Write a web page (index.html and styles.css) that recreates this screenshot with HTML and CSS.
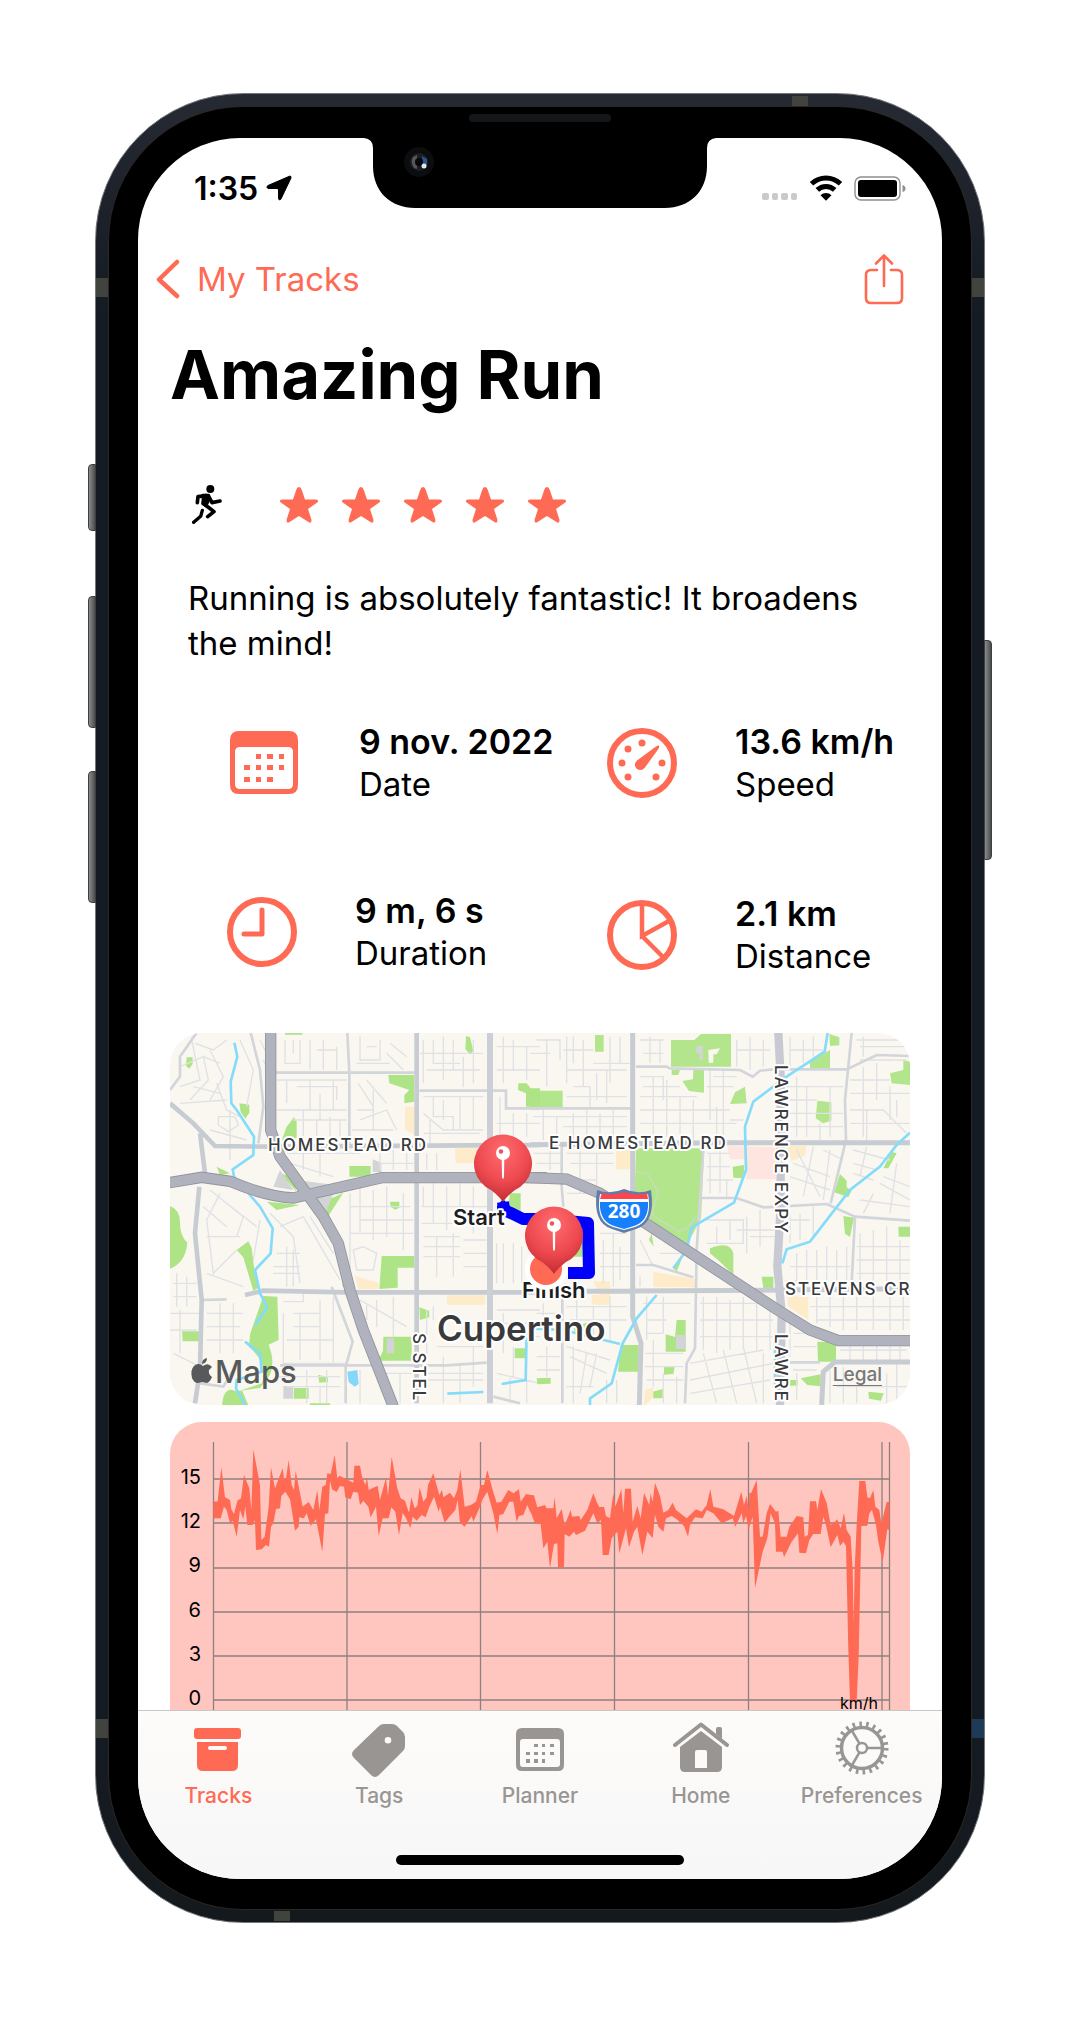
FILE: index.html
```html
<!DOCTYPE html>
<html lang="en">
<head>
<meta charset="utf-8">
<meta name="viewport" content="width=device-width, initial-scale=1">
<title>Amazing Run</title>
<link rel="stylesheet" href="styles.css">
</head>
<body>
<div class="phone">
  <span class="key key-mute"></span>
  <span class="key key-up"></span>
  <span class="key key-down"></span>
  <span class="key key-power"></span>
  <span class="band band-top"></span>
  <span class="band band-bottom"></span>
  <span class="band band-left-top"></span>
  <span class="band band-left-bottom"></span>
  <span class="band band-right-top"></span>
  <span class="band band-right-bottom"></span>
  <div class="bezel">
    <span class="speaker"></span>
    <div class="screen">
      <svg class="notch" viewBox="0 0 352 70" width="352" height="70" aria-hidden="true">
        <path d="M0 0Q9 1 9 10V28C9 54 27 70 51 70H301C325 70 343 54 343 28V10Q343 1 352 0Z"/>
        <circle cx="55" cy="24" r="15" fill="#0b0d0f"/>
        <circle cx="55" cy="24" r="9" fill="#1c1e22"/>
        <path d="M49 19Q46 24 50 30L53 31V17Z" fill="#55575a"/>
        <path d="M58 18L63 21V27H59Z" fill="#27568c"/>
        <circle cx="55" cy="24" r="4" fill="#050607"/>
        <circle cx="60" cy="28" r="2.500" fill="#dfe6f2"/>
      </svg>

      <header class="status">
        <div class="status-time">
          <span>1:35</span>
          <svg viewBox="0 0 26 26" width="26" height="26" aria-hidden="true"><path d="M23.500 1.200L1.800 10.600Q-.2 12.300 2 13.500H11Q12.500 13.500 12.500 15V23.500Q13 26 14.800 24.300L25 3Q25.400 .7 23.500 1.200Z" stroke="#000" stroke-linejoin="round"/></svg>
        </div>
        <div class="status-icons">
          <svg viewBox="0 0 36 26" width="36" height="26" fill="#cacaca" aria-hidden="true"><rect y="18" width="7" height="7" rx="2"/><rect x="10" y="18" width="6" height="7" rx="2"/><rect x="19" y="18" width="7" height="7" rx="2"/><rect x="29" y="18" width="6" height="7" rx="2"/></svg>
          <svg viewBox="0 0 34 26" width="34" height="26" fill="none" stroke="#000" stroke-width="5" aria-hidden="true"><path d="M2.500 8.800A21 21 0 0 1 31.500 8.800M8.300 14.900A12.500 12.500 0 0 1 25.700 14.900"/><path d="M11.500 20.300A8 8 0 0 1 22.500 20.300L17 25.700Z" fill="#000" stroke="none"/></svg>
          <svg viewBox="0 0 52 26" width="52" height="26" aria-hidden="true"><rect x="1" y="2" width="45" height="23" rx="6" fill="none" stroke="#8e8e8e" stroke-width="1.400"/><rect x="4" y="5" width="39" height="17" rx="3"/><path d="M48.500 10Q51.500 11 51.500 13.500T48.500 17Z" fill="#8e8e8e"/></svg>
        </div>
      </header>

      <nav class="nav">
        <a class="back" href="#tracks">
          <svg viewBox="0 0 24 40" width="24" height="40" fill="none" stroke="currentColor" stroke-width="4.500" stroke-linecap="round" stroke-linejoin="round" aria-hidden="true"><path d="M21 3L3 20.500L21 37"/></svg>
          <span>My Tracks</span>
        </a>
        <button class="share" type="button" aria-label="Share">
          <svg viewBox="0 0 40 52" width="40" height="52" fill="none" stroke="currentColor" stroke-width="2.600" stroke-linecap="round" stroke-linejoin="round" aria-hidden="true"><path d="M13 17H7Q2 17 2 22V45Q2 50 7 50H33Q38 50 38 45V22Q38 17 33 17H27M20 33V2.500M12 10.500L20 2.500L28 10.500"/></svg>
        </button>
      </nav>

      <main>
        <h1>Amazing Run</h1>
        <div class="rating">
          <svg viewBox="0 0 90 120" width="30" height="40" fill="none" stroke="#000" stroke-width="11" stroke-linecap="round" stroke-linejoin="round" role="img" aria-label="Running"><circle cx="55" cy="12" r="12" fill="#000" stroke="none"/><path d="M32 31L50 31L48 50L42 62L32 56L34 38Z" fill="#000" stroke-width="9"/><path d="M44 32L18 35L16 53M50 34L60 53L84 48M40 60L66 80L47 95"/><path d="M31 76L26 94L5 112" stroke-width="10"/></svg>
          <div class="stars" role="img" aria-label="5 of 5 stars">
            <svg class="star" viewBox="0 0 38 38"><use href="#star"/></svg>
            <svg class="star" viewBox="0 0 38 38"><use href="#star"/></svg>
            <svg class="star" viewBox="0 0 38 38"><use href="#star"/></svg>
            <svg class="star" viewBox="0 0 38 38"><use href="#star"/></svg>
            <svg class="star" viewBox="0 0 38 38"><use href="#star"/></svg>
          </div>
        </div>
        <p class="note">Running is absolutely fantastic! It broadens the mind!</p>

        <div class="stats">
          <div class="stats-col">
            <div class="stat">
              <svg viewBox="0 0 74 70" width="74" height="70" fill="currentColor" aria-hidden="true"><path fill-rule="evenodd" d="M12 3H62Q71 3 71 12V57Q71 66 62 66H12Q3 66 3 57V12Q3 3 12 3ZM13 19Q8 19 8 24V56Q8 61 13 61H61Q66 61 66 56V24Q66 19 61 19Z"/><path d="M29 26h5v5h-5zm11 0h6v5h-6zm12 0h5v5h-5zM17 37h6v5h-6zm12 0h5v5h-5zm11 0h6v5h-6zm12 0h5v5h-5zM17 49h6v5h-6zm12 0h5v5h-5zm11 0h6v5h-6z"/></svg>
              <div class="stat-text"><strong>9 nov. 2022</strong><span>Date</span></div>
            </div>
            <div class="stat">
              <svg viewBox="0 0 70 70" width="70" height="70" fill="none" stroke="currentColor" aria-hidden="true"><circle cx="35" cy="35" r="32" stroke-width="6"/><path d="M35 13V37H17" stroke-width="5" stroke-linecap="round" stroke-linejoin="round"/></svg>
              <div class="stat-text"><strong>9 m, 6 s</strong><span>Duration</span></div>
            </div>
          </div>
          <div class="stats-col stats-col-end">
            <div class="stat">
              <svg viewBox="0 0 70 70" width="70" height="70" fill="currentColor" aria-hidden="true"><circle cx="35" cy="35" r="32" fill="none" stroke="currentColor" stroke-width="6"/><circle cx="35" cy="15" r="3.500"/><circle cx="21" cy="21" r="3.500"/><circle cx="15" cy="35" r="3.500"/><circle cx="21" cy="49" r="3.500"/><circle cx="49" cy="49" r="3.500"/><circle cx="55" cy="35" r="3.500"/><path d="M49 18.500Q53 16 52 20L38 39.500Q34 44 29.500 40.500Q26 36.500 30 32.500Z"/></svg>
              <div class="stat-text"><strong>13.6 km/h</strong><span>Speed</span></div>
            </div>
            <div class="stat">
              <svg viewBox="0 0 70 70" width="70" height="70" fill="none" stroke="currentColor" aria-hidden="true"><circle cx="35" cy="35" r="32" stroke-width="6"/><path d="M35 4V36L62 21M35 36L57 58" stroke-width="4.500"/></svg>
              <div class="stat-text"><strong>2.1 km</strong><span>Distance</span></div>
            </div>
          </div>
        </div>

        <section class="map" aria-label="Map">
          <svg viewBox="0 0 740 372" aria-hidden="true">
            <defs>
              <path id="star" d="M19 1Q21 1 21.800 4L25 13.500H36Q40 14.500 36.500 17L28 23L31.500 34Q31.500 38 28.500 36L19 30L9.500 36Q6.500 38 6.500 34L10 23L1.500 17Q-2 14.500 2 13.500H13L16.200 4Q17 1 19 1Z"/>
              <radialGradient id="pin" cx=".5" cy=".25" r=".8"><stop offset="0" stop-color="#ff6b6e"/><stop offset=".55" stop-color="#ee4a50"/><stop offset="1" stop-color="#bb262e"/></radialGradient>
              <g id="marker"><path d="M0 42Q-4 36 -12 30A29 29 0 1 1 12 30Q4 36 0 42Z" transform="translate(0 26)" fill="url(#pin)"/><path d="M-1.300 24L-1 43Q0 47 1 43L1.300 24Z" fill="#fff"/><circle cy="19" r="7" fill="#fff"/><circle cx="-2" cy="17.500" r="2.200" fill="#ee5158"/></g>
            </defs>
            <rect width="740" height="372" fill="#faf7f1"/>

            <g transform="translate(-10 -13) scale(.33333)" fill="none">
              <g fill="#afe486">
                <path d="M80 112l18 0v20l-10 14-10-8zM238 250l30 4v24l-12 18-14-20zM402 292l8 12v50l-45 8 14-40zM685 165h78v80l-30 5v-25l15-15-60-20zM375 38h52v6h-52zM918 48l12 4 10 40-8 12-16-16zM1075 190l25 0 12 15h28v55h-42v-40l-24-10zM568 438h64v32h-64zM690 545h28v18l-12 6-14-8zM30 558q30 10 30 50t22 60q-5 60-52 78zM230 690l35-26 10 20 10 80 10 40-15 8-30-100zM310 828l42 2 4 130-30 14q20 50 4 90l-30 40-70 10q-40-20-44 44h80l-20-48 60-20q20-60-40-110l5-40z"/>
                <path d="M665 708h98v35h-50v60l-55 4zM778 862l30 10v20l-28 8zM670 950h85v72h-100l14-30zM66 934h54v30h-52zM402 1104h44v32h-44zM474 1064l30 8v14l-26 2zM1064 985h34v30h-34zM450 1150h60v6h-60zM360 460l50 55-15-45zM320 545l100 10-70 15zM460 560l90-42-45 70zM1050 520h32v60h-40zM540 700l30 110-22-10zM170 440l40 20-30 5z"/>
              </g>
              <path d="M735 260h30v85l-30-15zM885 385h70v45h-68zM585 768l70 20v20h-60zM860 826h116v28h-114z" fill="#fdebc9"/>
              <path d="M638 418l26 10v28h-26zM370 1098h30v38h-30zM680 955h22v45h-22zM340 500l60 10-40-60zM410 480l120 16-30 76-45-40z" fill="#d3d4d5"/>
              <path d="M562 1055l30-5 4 42-12 8-18-14z" fill="#85d7fa"/>
              <g stroke="#dfe1e5" stroke-width="4">
                <path d="M105 70L160 90 200 60M60 140L130 110 145 180 90 240M130 110L180 130M95 60L120 180 60 200M150 90L190 170 150 240M170 190L200 270 240 290M60 250L200 240M100 200L180 220M175 290H225L235 315 205 335 175 315ZM150 330L260 360M210 270V420M240 60L280 150 260 260M300 60L345 150M310 120L345 200"/>
                <path d="M375 60V130H420V60M400 60V100M450 60V150M470 90H530M490 60V150M530 80V150M600 50V120H660V60M620 80H650M690 70L740 110M680 100L730 150M590 130H690M350 180H560M380 180V250M410 200H530V240M450 180V270M350 270H560M480 220V300M520 180V270M595 190L640 260M620 180L680 250M600 300L680 270 710 330M640 210V330M575 330H700M590 270H640M400 300H560M430 270V350M470 300V360M510 290V350M540 300V360"/>
                <path d="M790 60V190M820 60V130H900M850 50V180M780 100H970M880 60V150M800 150H960M910 110V200M940 60V190M790 230H970M820 230V290H880V330M850 240V300M790 280L850 330H970M900 230V330M940 230V330M790 340H960M810 300V370M1010 80H1140M1030 50V190M1060 60V150M1100 80V180M1010 150H1140M1020 230V350M1060 280V360M1010 310H1140M1100 280V350"/>
                <path d="M380 400H600M390 430L520 470M430 390V450M480 390V470M660 400V450M700 390V450M740 400V450M800 400V450M830 400V450M660 430H760"/>
                <path d="M150 510L250 590 230 650M180 520L140 600 160 760 230 690M200 550L290 620M130 560L200 620M140 650H240M300 600L280 720M330 580L400 650 420 790M360 620L430 590 540 780M450 590L520 700M350 700L420 700M340 740H420M340 760H420M380 680V800M400 690V800"/>
                <path d="M570 520V780M600 500V640M640 510V660M680 500V650M570 560H750M600 600H760M570 640H760M580 690L610 680 650 700 640 750 590 750ZM730 520V690M790 500V560M820 490V610M860 500V630M900 490V560M940 500V640M785 560H980M785 610H980M790 650H900M790 680H900M790 710H900M830 650V770M880 640V770M910 660H980M910 700H980M910 740H980"/>
                <path d="M40 790H110M40 830H110M50 760V860M80 770V860M140 760L250 800M140 880H250M140 920H240M140 960H250M180 850V1000M220 850V1000M30 880H120M30 930H110M60 870V1000M40 1000L120 1040M370 880V1030H560M370 845H430V820M400 880H480M400 920H480M380 960H520M420 880V1020M480 840V1020M520 830V1030M600 840L740 920M620 850V900M650 840V920M700 830V950M660 1060H970M350 1070H540M380 1100H540M440 1050V1150M480 1100V1150M500 1050V1150M600 1050V1150M680 1070V1150M720 1060V1150M800 870V1020M830 980H970M820 860V900M850 1010V1150M900 1030V1150M940 980V1100M800 1080H970M1010 870H1140M1010 910H1140M1030 880V1000M1060 980V1070M1010 950H1140M1010 1060L1140 1090M1050 1070V1150M1100 1080V1150M1010 670V790M1030 670V790M1060 670V790M1085 680V790"/>
              </g>
              <g stroke="#d2d5da" stroke-width="8">
                <path d="M110 38L60 110V170L30 210M272 38L300 150 310 260 295 370M348 158H765M562 38L568 160V375M778 212H1038V265H1140M515 800L578 965 557 1040V1150M360 1036H860L980 1028M1000 1130L1080 1150M125 840L200 838M120 1090L190 1100 220 1050"/>
              </g>
              <path d="M30 250L100 310 165 378 330 380M120 340L135 460M118 500L105 640 125 840 120 1050 105 1150M770 38V1150M255 825L310 812 560 817H1140M330 380L1140 375" stroke="#c7ccd2" stroke-width="14"/>
              <path d="M990 38V1150" stroke="#ccd0d6" stroke-width="18"/>
              <path d="M223 68L232 110 212 185 214 250 230 270 282 350 280 405 218 448 222 470 300 560 338 625 332 700 285 750 300 820 322 862 285 915M255 965L300 1000 305 1055 230 1080 228 1105 255 1155M862 1121L970 1116M1025 1092L1097 1080 1100 935" stroke="#85dcfa" stroke-width="8"/>
              <g stroke="#90949d" stroke-width="34"><path d="M332 38V330L360 410 490 590 535 670 570 810 610 930 700 1160"/><path d="M28 488L125 472 210 484Q320 530 400 534L665 473H1160"/></g>
              <g stroke="#b0b3bd" stroke-width="29"><path d="M332 36V330L360 410 490 590 535 670 570 810 610 930 700 1160"/><path d="M28 488L125 472 210 484Q320 530 400 534L665 473H1160"/></g>
            </g>

            <g transform="translate(360 -13) scale(.33333)" fill="none">
              <g fill="#afe486">
                <path d="M195 45h26v50h-26zM0 212l98 0v50l-98 2zM423 60h70l20-18h90v98h-180zM425 150l25 0-5 15h-20zM490 148h32v70l-45-5-20-30 32-5zM645 200l5 50-50 2 15-35zM840 150v-25l60-35v55zM898 42l30 10v24l-28 2zM1080 160l40-10v-30l20 5v70l-55-5zM862 242l42 5v55l-25 8-22-15zM318 385h205l-10 210-50 95-150-135z" opacity=".95"/>
                <path d="M540 685q60-25 70 15v65l-40-40-30-25zM695 770h35v35h-30zM608 440l34-5v40l-32-2zM930 462l20 20v20l15 10-10 20-42-15zM1060 445l25-50 15 5-25 45zM940 588l32 5-12 58-15-10zM1105 620h35v30h-34zM440 900h27v95h-60v-52l28 8zM272 975h54v80h-62zM402 1040h32l-4 22-28 2zM368 1115l30-8v28h-28zM862 965h56v60h-54zM775 1080h28v16l-26 2zM812 1075l60-12v36l-40-4zM1015 1115l46 5-8 22-36-6zM20 1075l42-2v18l-40 2zM130 920l40-12 8 20-42 18zM365 640l6 40-14-20zM430 745l30-40-20 50zM130 670h28v40h-28z"/>
              </g>
              <path d="M258 390h45v58h-45zM770 378h60l-6 30-40 15zM370 755l125 22v25h-125zM190 784h50v70h-55v-30h25zM765 780h35v50h35v70l-60-40zM345 1110l25-8v30l-28 25z" fill="#fdebc9"/>
              <path d="M592 378l88 2h60v98h-90v-60h-50z" fill="#fee5e0"/>
              <path d="M438 945h29v42h-29zM500 78l18 0v45l-10-4v-18l-10-4zM0 0" fill="#d3d4d5"/>
              <path d="M535 90l35-5-10 18h-10v25h-14z" fill="#faf7f1"/>
              <path d="M317 455l35 5 32 55-18 70 80 50 25-10 28-35" stroke="#c4dfae" stroke-width="6"/>
              <g stroke="#dfe1e5" stroke-width="4">
                <path d="M20 60H90V120M0 100H60M50 60V200M110 50V190M100 90H190M130 50V130M160 60V200M110 150H290M190 130H300M240 50V190M270 50V130M200 160V240M230 150V250M130 200H180V260M110 230H290M130 280V360M10 290H290M40 270V360M80 290V360M170 270V350M100 320H290M210 280V340M250 270V350"/>
                <path d="M330 60H400M340 100H400M360 50V130M390 60V130M330 170H400V240M340 200H450M370 170V360M410 180V350M330 230H500M450 230V350M330 270H600M490 240V360M540 150V300M330 310H620M580 150V360M530 200H610M550 170H620M620 60V140M660 50V150M700 60V140M620 90H720M560 260V360M600 300H640"/>
                <path d="M780 50V140M820 60V130M850 50V110M780 90H880M800 170V350M770 200H940M830 200V350M770 240H860M770 280H940M900 200V350M770 320H940M870 310V360M980 60H1130M1000 50V110M990 80H1130M990 120H1130M1040 130V240M1000 140V350M960 180H1080M960 220H1140M1080 200V300M960 270H1060L1130 340M960 310H1140M1010 270V360M1100 240V290"/>
                <path d="M790 430L900 470M780 470L900 510M800 390L870 530M850 380L820 530M880 390L940 420M900 390L880 540M970 390L1080 420M970 430L1040 450M970 460L1030 480M1010 380L990 470M1060 470L1140 500M1100 430L1080 580M1030 520L1000 580M1050 490L1140 540M990 540L1140 560M530 400H600M540 400V520M570 390V520M530 440H600M530 480H610M590 480V530"/>
                <path d="M530 600H640V670H560V620M600 600V660M650 590V700M690 570V680M620 630H740M530 670H620M660 650H740M770 600H840M780 580V670M810 580V660M850 560V650M330 660L370 740M390 700H470M330 770V800M10 400H90M20 430H90M60 390V450M110 400H250M120 430H250M150 390V520M200 400V500M110 480H200M110 520H190M210 600H290M210 640H290M220 660V790M250 640V800M270 680V780M210 700H300M210 740H300"/>
                <path d="M800 700V790M830 690V800M860 690V800M890 680V800M920 690V790M950 680V790M990 640V800M1030 630V800M1070 620V800M1110 660V800M780 740H960M980 680H1140M980 720H1140M980 760H1140M860 820V910M900 830V920M940 820V930M980 830V930M1030 820V930M1080 820V930M1120 830V930M840 860H1140M860 900H1140M930 960H1130M930 990H1130M960 950V1020M1000 960V1020M1040 950V1020M1080 950V1020M1110 960V1020M900 1050V1150M940 1040V1150M980 1100V1150M920 1100H1140M1070 1060V1150M1100 1030V1150"/>
                <path d="M110 860H290M120 900H290M20 880H90M40 850V960M140 830V960M190 860V950M240 830V960M110 980L240 1020M20 1010H90M20 1050H90M50 980V1070M120 1010L230 1060M130 980V1150M170 1000L150 1120M200 1000L180 1100M110 1100H190M230 1080V1150M260 1080V1150M340 850H480M350 830V960M400 830V940M350 900H410M350 940H400M345 1000H460M345 1040H460M350 1080H460M370 960V1100M400 1060V1150M440 1070V1150M510 850H740M520 830V990M560 830V1000M600 840V990M640 830V990M680 850V990M720 870V990M510 900H730M510 950H730M480 1030L700 990M480 1080L730 1030M480 1120L720 1080M520 1000L560 1150M580 990L620 1150M640 980L680 1150M700 1000V1150M780 880V1010M790 940H860M790 980H860M790 1050H860M800 1060V1140"/>
              </g>
              <g stroke="#d2d5da" stroke-width="8">
                <path d="M318 140H410L420 145 630 150 668 170 690 152 730 148 950 148 1040 105 1140 108M0 265H305M965 38L945 240 948 360 902 550M520 390L500 690 495 985 470 1030 465 1150M515 534H620L700 562 890 552 975 590 1140 602M975 590L965 790M318 735H370L490 772M95 380V500L100 560M97 800V1150M780 1027H870"/>
              </g>
              <path d="M308 38V890L333 970 328 1155M0 374L560 368 1140 368M170 814L760 810 1140 806M1140 1026H915L880 1055 875 1155" stroke="#c7ccd2" stroke-width="15"/>
              <path d="M745 38L752 170V560L742 740 755 880 750 1155" stroke="#c7cad2" stroke-width="25"/>
              <path d="M893 38L884 95 770 170 670 245 645 320 648 450 612 548 485 622 470 690 430 745M1140 338L1100 375 1050 440 960 510 840 665 770 688 757 730M380 825L320 895 278 970 245 1090 180 1135V1155M0 925L100 930 270 972M735 960V1100" stroke="#85dcfa" stroke-width="8"/>
              <path d="M-20 472L110 477 210 520 740 868 840 930 925 962H1160" stroke="#90949d" stroke-width="34"/>
              <path d="M-20 472L110 477 210 520 740 868 840 930 925 962H1160" stroke="#b0b3bd" stroke-width="29"/>
            </g>

            <path d="M333 169L334 177 343 181 353 186H376L418 190 419 240H398" fill="none" stroke="#0000fb" stroke-width="12" stroke-linejoin="round"/>
            <path d="M327 173L333 166 340 173V181H327Z" fill="#0000fb"/>
            <g class="road-label">
              <text x="98" y="118">HOMESTEAD RD</text>
              <text x="379" y="116">E HOMESTEAD RD</text>
              <text x="615" y="262">STEVENS CR</text>
              <text transform="translate(605 32) rotate(90)">LAWRENCE EXPY</text>
              <text transform="translate(605 301) rotate(90)">LAWRE</text>
              <text transform="translate(243 300) rotate(90)">S STEL</text>
            </g>
            <text class="pin-label" x="283" y="192">Start</text>
            <text class="pin-label" x="352" y="265">Finish</text>
            <text class="city-label" x="267" y="308">Cupertino</text>
            <circle cx="376" cy="236" r="18.500" fill="#ff6a54" stroke="#fff" stroke-width="5"/>
            <use href="#marker" x="333" y="101"/>
            <use href="#marker" x="384" y="173"/>

            <path d="M427 157Q440 162 454 156Q468 162 481 157Q486 190 466 196L454 200 442 196Q422 190 427 157Z" fill="#5f7dab"/>
            <path d="M430 161Q442 164 454 160Q466 164 478 161Q483 188 465 194L454 197 443 194Q425 188 430 161Z" fill="#fff"/>
            <path d="M432 160Q444 163 454 159Q466 163 477 160L478 166H430Z" fill="#fb464f"/>
            <path d="M430 169H478Q479 188 464 193L454 196 444 193Q429 188 430 169Z" fill="#167ffb"/>
            <text class="shield-label" x="454" y="185">280</text>

            <g fill="#57595a"><path d="M33 333Q28 329 24 333T22 345Q24 350 28 350L32 349 37 350Q40 349 42 344Q38 341 39 337L42 334Q38 329 33 333Z"/><path d="M32 331Q32 326 37 325Q37 330 32 331Z"/></g>
            <text class="brand-label" x="45" y="350">Maps</text>
          </svg>
          <a class="legal" href="#legal">Legal</a>
        </section>

        <section class="chart" aria-label="Speed chart">
          <svg viewBox="0 0 740 288" aria-hidden="true">
            <path d="M43 57H720M43 101H720M43 146H720M43 190H720M43 234H720M43 278H720M43.500 20V288M177 20V288M310.500 20V288M444.500 20V288M578.500 20V288M712 20V288M719.500 20V288" fill="none" stroke="#8d8080" stroke-width="1.300"/>
            <g class="axis-label">
              <text x="31" y="62">15</text><text x="31" y="106">12</text><text x="31" y="150">9</text><text x="31" y="195">6</text><text x="31" y="239">3</text><text x="31" y="283">0</text>
            </g>
            <g fill="#ff6a54">
              <polygon transform="translate(-10 -12) scale(.33333)" points="160,275 173,274 184,172 195,262 210,270 214,298 222,312 232,272 243,265 252,195 268,235 274,300 280,118 300,225 304,390 314,380 326,290 333,172 345,235 368,175 372,205 378,205 386,150 395,225 402,240 407,182 425,275 428,290 446,276 460,300 472,240 478,300 487,230 497,225 502,190 512,192 524,135 532,205 538,197 560,208 580,218 583,167 600,167 606,200 616,225 621,203 626,240 653,227 660,270 678,203 684,258 695,140 712,235 722,265 735,272 747,308 754,262 764,295 772,287 779,232 790,275 800,262 804,225 820,190 838,255 846,240 850,262 870,248 882,265 892,240 901,178 914,290 932,285 948,275 962,225 972,225 982,180 998,240 1010,278 1024,275 1045,240 1060,250 1077,238 1082,275 1098,252 1112,255 1112,310 1102,285 1090,315 1077,318 1070,335 1060,275 1048,275 1030,312 1018,315 1012,372 1000,310 982,245 968,268 960,290 940,335 935,318 914,350 900,338 893,270 886,300 868,320 854,338 840,290 836,305 822,260 808,290 797,322 785,315 770,332 758,320 751,354 738,325 728,308 717,375 706,305 694,292 686,325 668,325 656,378 648,290 632,322 625,290 610,272 600,285 594,248 580,245 572,268 556,262 552,230 540,228 530,246 516,238 510,212 505,310 495,312 487,425 468,328 452,348 440,310 432,325 418,322 416,350 405,362 390,268 376,245 364,258 360,295 348,297 340,340 333,350 327,410 318,405 305,418 288,420 285,330 278,345 262,345 256,290 250,328 240,300 230,380 218,332 210,340 200,300 192,290 182,325 160,325"/>
              <polygon transform="translate(360 -12) scale(.33333)" points="0,255 12,256 22,292 45,285 50,295 70,295 74,262 80,325 95,297 104,345 122,300 126,320 148,318 152,330 172,300 190,250 200,275 208,292 222,290 228,318 240,325 250,250 256,290 274,238 280,310 285,236 303,236 308,335 322,288 332,325 342,248 358,285 362,250 368,275 375,218 390,258 400,308 415,300 428,278 438,300 470,325 498,298 515,305 530,285 541,238 550,290 580,298 612,318 634,245 642,285 650,258 656,300 658,250 664,248 680,210 690,380 698,380 710,310 720,282 738,305 745,302 752,380 770,380 778,350 800,318 820,322 824,380 834,375 840,274 858,274 862,300 873,238 890,278 902,345 915,335 922,328 932,355 942,308 950,360 962,380 968,480 971,640 974,480 980,345 988,213 1006,213 1012,262 1020,265 1030,240 1036,290 1048,300 1054,340 1062,308 1070,276 1078,276 1078,360 1072,358 1058,455 1045,395 1038,345 1026,300 1018,310 1012,347 994,348 986,740 980,872 960,872 955,720 948,408 940,395 930,408 922,375 902,412 888,345 880,320 872,372 850,372 838,390 828,430 808,428 804,370 785,395 762,442 758,425 738,425 735,340 722,310 712,385 698,425 675,535 668,320 656,358 648,318 640,340 635,310 616,350 608,325 575,340 550,310 530,300 518,325 495,322 480,345 474,380 462,348 440,328 425,318 408,325 400,365 385,350 375,315 368,385 352,365 337,435 322,350 312,365 297,412 288,355 268,430 262,365 245,385 236,435 218,435 213,330 202,340 190,310 165,362 138,375 132,365 118,380 104,372 102,472 84,472 82,400 72,402 60,475 52,395 40,415 32,342 14,338 0,300"/>
            </g>
            <text class="unit-label" x="670" y="287">km/h</text>
          </svg>
        </section>
      </main>

      <footer class="tabbar">
        <nav class="tabs">
          <a class="tab tab-active" href="#tracks">
            <svg viewBox="0 0 56 56" width="56" height="56" fill="currentColor" aria-hidden="true"><path d="M7 7H48Q51 7 51 10V15Q51 18 48 18H7Q4 18 4 15V10Q4 7 7 7Z"/><path fill-rule="evenodd" d="M7 21H48V44Q48 50 42 50H13Q7 50 7 44ZM20 25Q18 25 18 27T20 29H35Q37 29 37 27T35 25Z"/></svg>
            <span>Tracks</span>
          </a>
          <a class="tab" href="#tags">
            <svg viewBox="0 0 56 56" width="56" height="56" fill="currentColor" aria-hidden="true"><path fill-rule="evenodd" d="M28 5Q30 3 33 3H41Q44 3 46 5L52 11Q54 13 54 16V25Q54 28 52 30L28 54Q24 58 20 54L3 37Q-1 33 3 29ZM37 16A3.300 3.300 0 1 0 37 22.600A3.300 3.300 0 1 0 37 16Z"/></svg>
            <span>Tags</span>
          </a>
          <a class="tab" href="#planner">
            <svg viewBox="0 0 56 56" width="56" height="56" fill="currentColor" aria-hidden="true"><path fill-rule="evenodd" d="M10 7H46Q52 7 52 13V44Q52 50 46 50H10Q4 50 4 44V13Q4 7 10 7ZM11 18Q8 18 8 21V43Q8 46 11 46H45Q48 46 48 43V21Q48 18 45 18Z"/><path d="M22 23h4v3h-4zm8 0h3v3h-3zm8 0h4v3h-4zM14 31h4v3h-4zm8 0h4v3h-4zm8 0h3v3h-3zm8 0h4v3h-4zM14 38h4v4h-4zm8 0h4v4h-4zm8 0h3v4h-3z"/></svg>
            <span>Planner</span>
          </a>
          <a class="tab" href="#home">
            <svg viewBox="0 0 56 56" width="56" height="56" fill="currentColor" aria-hidden="true"><path d="M2 24L28 3.500L54 24" fill="none" stroke="currentColor" stroke-width="4" stroke-linecap="round" stroke-linejoin="round"/><path d="M43 8Q43 6 45 6H47Q49 6 49 8V18L43 13Z"/><path fill-rule="evenodd" d="M28 10L49 26V46Q49 51 44 51H12Q7 51 7 46V26ZM24 29Q22 29 22 31V47H34V31Q34 29 32 29Z"/></svg>
            <span>Home</span>
          </a>
          <a class="tab" href="#preferences">
            <svg viewBox="0 0 56 56" width="56" height="56" fill="none" stroke="currentColor" aria-hidden="true"><circle cx="28" cy="27" r="20.500" stroke-width="3.500"/><circle cx="28" cy="27" r="24" stroke-width="5" stroke-dasharray="2.600 4.254"/><circle cx="28" cy="27" r="5" stroke-width="2.500"/><path d="M33 27H49M25.500 22.700L17.500 9M25.500 31.300L17.500 45" stroke-width="2.500"/></svg>
            <span>Preferences</span>
          </a>
        </nav>
        <span class="home-indicator"></span>
      </footer>
    </div>
  </div>
</div>
</body>
</html>
```
FILE: styles.css
```css
* {
  box-sizing: border-box;
}

body {
  margin: 0;
  padding: 93px 95px;
  background: #fff;
  color: #000;
  font-family: Inter, "Liberation Sans", sans-serif;
}

a {
  color: inherit;
  text-decoration: none;
}

svg {
  display: block;
}

/* Device shell */
.phone {
  position: relative;
  padding: 12px;
  border: 1px solid #74777c;
  border-radius: 148px;
  background: linear-gradient(#262a33, #151b22 12%, #151b22 90%, #14191d);
  max-width: 890px;
  margin: 0 auto;
}

.bezel {
  position: relative;
  padding: 31px 29px 30px;
  border: 1px solid #2b2826;
  border-radius: 135px;
  background: #000;
}

.screen {
  position: relative;
  overflow: hidden;
  border-radius: 102px;
  background: #fff;
}

.key {
  position: absolute;
  left: -8px;
  width: 8px;
  border: 1px solid #3c3e40;
  border-radius: 4px 0 0 4px;
  background: linear-gradient(90deg, #8a8b8c, #4b4c4e);
}

.key-mute {
  top: 370px;
  height: 67px;
}

.key-up {
  top: 502px;
  height: 132px;
}

.key-down {
  top: 677px;
  height: 132px;
}

.key-power {
  top: 546px;
  right: -8px;
  left: auto;
  height: 220px;
  border-radius: 0 4px 4px 0;
}

.band {
  position: absolute;
  width: 12px;
  height: 19px;
  background: #41433f;
}

.band-top,
.band-bottom {
  width: 16px;
  height: 10px;
}

.band-top {
  top: 2px;
  right: 176px;
}

.band-bottom {
  bottom: 1px;
  left: 178px;
}

.band-left-top {
  top: 184px;
  left: 0;
}

.band-left-bottom {
  bottom: 184px;
  left: 0;
}

.band-right-top {
  top: 184px;
  right: 0;
}

.band-right-bottom {
  right: 0;
  bottom: 184px;
  background: #1f3a59;
}

.speaker {
  position: absolute;
  top: 7px;
  left: 50%;
  width: 142px;
  height: 8px;
  border-radius: 4px;
  background: #14171a;
  transform: translateX(-50%);
}

.notch {
  position: absolute;
  top: 0;
  left: 50%;
  transform: translateX(-50%);
}

/* Status bar */
.status {
  display: flex;
  align-items: center;
  justify-content: space-between;
  height: 100px;
  padding: 0 36px 0 56px;
}

.status-time {
  display: flex;
  align-items: center;
  gap: 8px;
  font-size: 32px;
  font-weight: 600;
}

.status-icons {
  display: flex;
  align-items: center;
  gap: 11px;
}

/* Navigation */
.nav {
  display: flex;
  align-items: center;
  justify-content: space-between;
  height: 82px;
  padding: 0 38px 0 18px;
  color: #ff6a54;
}

.back {
  display: flex;
  align-items: center;
  gap: 17px;
  font-size: 33px;
}

.share {
  padding: 0;
  border: 0;
  background: none;
  color: inherit;
}

h1 {
  margin: 13px 32px 0;
  font-size: 67px;
  line-height: 84px;
  font-weight: 700;
}

.rating {
  display: flex;
  align-items: center;
  gap: 58px;
  margin-top: 68px;
  padding-left: 54px;
}

.stars {
  display: flex;
  gap: 24px;
}

.star {
  width: 38px;
  height: 38px;
  fill: #ff6a54;
}

.note {
  margin: 51px 48px 0 50px;
  font-size: 33px;
  line-height: 45px;
}

.stats {
  display: grid;
  grid-template-columns: 380px 1fr;
  margin: 55px 0 0 89px;
}

.stats-col {
  display: flex;
  flex-direction: column;
  gap: 85px;
}

.stats-col-end {
  gap: 88px;
}

.stat {
  display: flex;
  align-items: center;
  gap: 58px;
  color: #ff6a54;
}

.stat svg {
  flex: none;
}

.stat-text {
  display: flex;
  flex-direction: column;
  color: #000;
  font-size: 33px;
  line-height: 42px;
  white-space: nowrap;
}

.stat-text strong {
  font-size: 34px;
  font-weight: 600;
}

/* Map */
.map {
  position: relative;
  overflow: hidden;
  margin: 56px 32px 0;
  border-radius: 32px;
}

.map svg,
.chart svg {
  width: 100%;
}

.map text {
  fill: #3a3a3c;
  stroke: #fff;
  stroke-width: 4px;
  stroke-linejoin: round;
  paint-order: stroke;
}

.map .road-label text {
  font-size: 17px;
  font-weight: 500;
  letter-spacing: 2px;
}

.map .pin-label {
  fill: #1d1d1f;
  font-size: 22px;
  font-weight: 600;
}

.map .city-label {
  font-size: 35px;
  font-weight: 600;
}

.map .shield-label {
  fill: #fff;
  stroke: none;
  font-family: "Noto Sans", sans-serif;
  font-size: 19px;
  font-weight: 700;
  text-anchor: middle;
}

.map .brand-label {
  fill: #57595a;
  stroke: none;
  font-size: 31px;
  font-weight: 500;
}

.legal {
  position: absolute;
  right: 28px;
  bottom: 18px;
  color: #77787a;
  font-size: 19px;
  line-height: 24px;
  font-weight: 500;
  text-decoration: underline;
  text-underline-offset: 4px;
}

/* Chart */
.chart {
  overflow: hidden;
  margin: 17px 32px 0;
  border-radius: 32px 32px 0 0;
  background: #ffc5bf;
}

.axis-label {
  font-size: 20px;
  text-anchor: end;
}

.unit-label {
  font-size: 16px;
}

/* Tab bar */
.tabbar {
  display: flex;
  flex-direction: column;
  align-items: center;
  gap: 47px;
  padding: 10px 0 14px;
  border-top: 1px solid #c9c6c5;
  background: linear-gradient(#fdfbf9, #f7f7f8);
}

.tabs {
  display: grid;
  grid-template-columns: repeat(5, 1fr);
  width: 100%;
}

.tab {
  display: flex;
  flex-direction: column;
  align-items: center;
  gap: 7px;
  color: #999593;
  font-size: 21px;
  line-height: 24px;
  font-weight: 500;
}

.tab-active {
  color: #ff6a54;
}

.home-indicator {
  width: 288px;
  height: 10px;
  border-radius: 5px;
  background: #000;
}
```
